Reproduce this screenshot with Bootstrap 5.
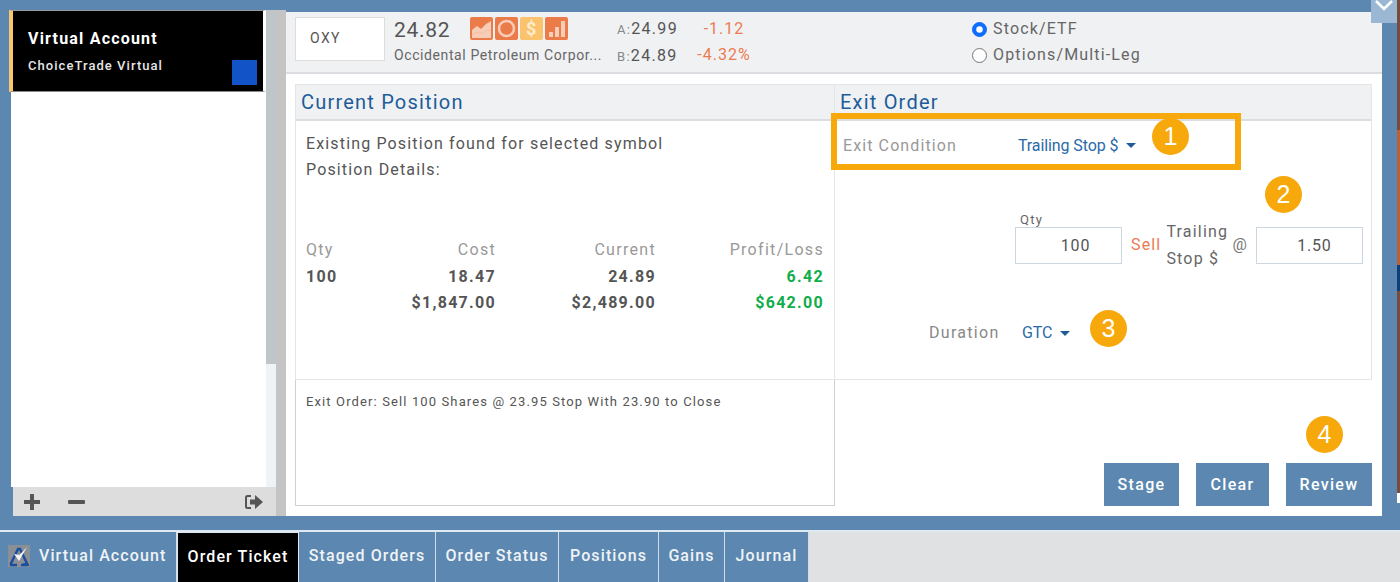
<!DOCTYPE html>
<html lang="en">
<head>
<meta charset="utf-8">
<title>Order Ticket</title>
<link href="https://cdn.jsdelivr.net/npm/bootstrap@5.3.0/dist/css/bootstrap.min.css" rel="stylesheet">
<style>
html,body{height:582px;overflow:hidden}
body{font-family:Roboto,"Liberation Sans",sans-serif;background:#dfe1e3;color:#555;letter-spacing:1.3px;font-size:16px}
.stage{height:530px;background:#5b87b0;padding:10px 18px 14px 11px;display:flex;position:relative}
.edge{position:absolute;left:1397px;top:0;width:3px;height:503px;background:linear-gradient(#7c4a39 0 130px,#b8603c 130px 265px,#0f3f78 265px 291px,#7c4a39 291px 493px,#fff 493px)}
.collapse-tab{position:absolute;left:1371px;top:0;width:26px;height:23px;background:#9ab8d3;display:flex;justify-content:center}
.side{width:265px;display:flex;flex-direction:column;flex:none}
.side-list{flex:1;display:flex;min-height:0}
.side-white{width:255px;background:#fff}
.acct{height:82px;margin-left:-2px;background:#000;border-left:4px solid #f9c76e;border-right:3px solid #fff;border-top:1px solid #999;border-bottom:1px solid #888;color:#fff;padding:17px 15px 0;position:relative}
.acct-name{font-size:16px;font-weight:700;line-height:22px;letter-spacing:1.2px}
.acct-sub{font-size:13px;font-weight:500;line-height:20px;margin-top:6px;color:#e6e6e6;letter-spacing:1.05px}
.swatch{position:absolute;right:6px;bottom:6px;width:25px;height:25px;background:#1254c8}
.sbar{width:10px;background:linear-gradient(#bfc6ca 0 354px,#f0f3f5 354px)}
.side-foot{height:29px;background:#ddd;margin-left:2px;width:263px;display:flex;align-items:center;padding:0 12px 0 10px}
.minus-ico{margin-left:26px}
.gutter{width:10px;flex:none;background:#c4c4c4}
.main{flex:1;background:#fff;display:flex;flex-direction:column;position:relative;margin-top:2px}
.ticker{height:62px;flex:none;background:#f0f1f3;border-bottom:2px solid #dcdde0;display:flex;padding:5px 0 0 9px}
.sym-box{width:90px;height:44px;border:1px solid #ddd;background:#fff;font-size:14px;line-height:40px;padding-left:14px;letter-spacing:1.4px}
.quote{width:208px;margin-left:9px}
.last{font-size:21px;line-height:26px;display:flex;align-items:flex-start;letter-spacing:.7px}
.badges{display:flex;gap:2px;margin-left:20px}
.badges svg{display:block}
.co{font-size:14px;line-height:18px;color:#666;margin-top:3px;white-space:nowrap;letter-spacing:.6px}
.ab{width:100px;margin-left:15px;margin-top:-1px;font-size:16px;line-height:26px}
.ab small{font-size:13px;color:#888}
.chg{width:70px;color:#ec7b52;font-size:16px;line-height:26px;text-align:center;margin-left:-28px;margin-top:-1px;letter-spacing:1px}
.kinds{margin-left:213px;margin-top:-1px;font-size:16px;letter-spacing:1.15px}
.kinds .form-check{min-height:26px;margin:0;padding-left:21px;display:flex;align-items:center}
.kinds .form-check-input{width:15px;height:15px;margin:0 6px 0 -21px;float:none;border-color:#777;flex:none}
.kinds .form-check-input:checked{background-color:#0d6efd;border-color:#0d6efd}
.kinds label{color:#666}
.panels{display:grid;grid-template-columns:540px 537px;grid-template-rows:296px 126px;margin:10px 0 0 9px}
.pane{border:1px solid #e4e5e7;display:flex;flex-direction:column;min-width:0}
.pane+.pane{border-left:0}
.pane-head{height:36px;flex:none;background:#f0f1f3;border-bottom:2px solid #dcdde0;color:#1d5c99;font-size:20px;line-height:35px;padding-left:5px;letter-spacing:1.2px}
.pane-body{flex:1;padding:10px 10px 9px;line-height:26.5px;position:relative}
.intro{letter-spacing:1.15px;line-height:26px}
.postable{display:grid;grid-template-columns:70px 120px 160px 168px;line-height:26.5px;margin-top:54px}
.postable>div{text-align:right;font-weight:700;color:#555}
.postable>div.hd{font-weight:400;color:#999}
.postable>div.l{text-align:left}
.postable>div.gn{color:#0fae4b}
.cond{display:flex;align-items:center;height:22px;margin:4px 0 0 -2px;color:#999;letter-spacing:1.1px}
.cond-lab{width:175px}
.dur-lab{width:93px}
.drop{color:#2a6aa8;font-size:16px;letter-spacing:-.1px;text-decoration:none;padding:0;border:0;background:none}
.drop.dropdown-toggle::after{margin-left:8px;vertical-align:.15em;border-top:5px solid #1d5c99;border-left-width:5.5px;border-right-width:5.5px}
.entry{display:flex;align-items:center;margin-top:61px;margin-left:170px;position:relative}
.entry>*{flex:none}
.entry .form-control{width:107px;height:37px;border-radius:0;border:1px solid #ccd6e0;text-align:center;font-size:16px;color:#555;letter-spacing:.8px;padding:0}
.entry .qty-in{padding-left:14px}
.entry .stop-in{padding-left:9px}
.qty-lab{position:absolute;left:5px;top:-7px;font-size:13px;line-height:18px;color:#666}
.sell{color:#ec7b52;margin:0 5px 0 9px;letter-spacing:1.15px}
.ts{line-height:27px;width:66px;color:#666;letter-spacing:1.2px}
.at{width:14px;margin-right:10px;color:#777;letter-spacing:0}
.dur{display:flex;align-items:center;margin-top:48px;margin-left:84px;color:#888}
.pane-foot{border:1px solid #d0d0d0;border-top:0}
.foot-note{font-size:13px;padding:13px 10px 0;line-height:18px;letter-spacing:1.12px;color:#555}
.foot-right{display:flex;justify-content:flex-end;align-items:flex-end;gap:17px}
.foot-right .btn{height:43px;background:#5b87b0;border:0;border-radius:0;color:#fff;font-weight:500;font-size:16px;letter-spacing:1.3px;padding:0}
.b1{width:75px}.b2{width:73px}.b3{width:86px}
.callout{position:absolute;width:37px;height:37px;border-radius:50%;background:#f7a80b;color:#fff;font-size:25px;line-height:37px;text-align:center;letter-spacing:0;font-family:"Liberation Sans",sans-serif}
.c1{left:866px;top:106px}.c2{left:979px;top:164px}.c3{left:804px;top:298px}.c4{left:1020px;top:404px}
.hl{position:absolute;left:545px;top:101px;width:410px;height:57px;border:6px solid #f7a80b}
.tabs{height:52px;background:#dfe1e3;border-top:2px solid #dfe9f1;display:flex;flex-wrap:nowrap;margin:0;padding:0;list-style:none}
.tabs a{display:flex;align-items:center;height:100%;background:#5b87b0;color:#f0f3f6;font-weight:500;font-size:16px;letter-spacing:1.1px;text-decoration:none;border-right:1px solid #cfdeea;padding:0 0 2px;justify-content:center}
.tabs a.on{background:#000;color:#fff;border:1px solid #dfe9f1;border-bottom:0}
.tabs a.t1{justify-content:flex-start;padding-left:8px}
.t1{width:177px}.t2{width:122px}.t3{width:137px}.t4{width:123px}.t5{width:100px}.t6{width:66px}.t7{width:84px}
.t1 svg{margin-right:9px}
</style>
</head>
<body>
<div class="stage">
  <div class="side">
    <div class="side-list">
      <div class="side-white">
        <div class="acct">
          <div class="acct-name">Virtual Account</div>
          <div class="acct-sub">ChoiceTrade Virtual</div>
          <div class="swatch"></div>
        </div>
      </div>
      <div class="sbar"></div>
    </div>
    <div class="side-foot">
      <svg width="18" height="18" viewBox="0 0 18 18"><path fill="#555" d="M7 1h4v6h6v4h-6v6H7v-6H1V7h6z"/></svg>
      <svg class="minus-ico" width="18" height="18" viewBox="0 0 18 18"><rect x="1" y="7" width="17" height="4" rx="1" fill="#555"/></svg>
      <svg class="ms-auto" width="20" height="18" viewBox="0 0 20 18"><path fill="none" stroke="#555" stroke-width="2" d="M7 3H3.500Q2 3 2 4.500v9Q2 15 3.500 15H7"/><path fill="#555" d="M6 6.500h5V2l8 7-8 7v-4.500H6z"/></svg>
    </div>
  </div>
  <div class="gutter"></div>
  <div class="main">
    <div class="ticker">
      <div class="sym-box">OXY</div>
      <div class="quote">
        <div class="last">24.82
          <div class="badges">
            <svg width="23" height="23" viewBox="0 0 23 23"><rect width="23" height="23" rx="2" fill="#ec7b4a"/><path fill="#f8cdb8" d="M2 13l5-4 4 3 5-5 5-3v9l-5 1-5 3-4-2-5 3z"/><path fill="#f8cdb8" d="M2 18l5-3 4 2 5-3 5-1v8H2z"/></svg>
            <svg width="23" height="23" viewBox="0 0 23 23"><rect width="23" height="23" rx="2" fill="#ec7b4a"/><circle cx="11.500" cy="11.500" r="7.500" fill="none" stroke="#f8cdb8" stroke-width="2.500"/></svg>
            <svg width="23" height="23" viewBox="0 0 23 23"><rect width="23" height="23" rx="2" fill="#fcc36e"/><text x="11.500" y="18" font-size="18" font-weight="700" text-anchor="middle" fill="#fdeccd" font-family="Roboto,sans-serif">$</text></svg>
            <svg width="23" height="23" viewBox="0 0 23 23"><rect width="23" height="23" rx="2" fill="#ec7b4a"/><path fill="#f8cdb8" d="M4 15h4v5H4zM10 10h4v10h-4zM16 4h4v16h-4z"/></svg>
          </div>
        </div>
        <div class="co">Occidental Petroleum Corpor...</div>
      </div>
      <div class="ab"><div><small>A:</small>24.99</div><div><small>B:</small>24.89</div></div>
      <div class="chg"><div>-1.12</div><div>-4.32%</div></div>
      <div class="kinds">
        <div class="form-check"><input class="form-check-input" type="radio" name="k" id="k1" checked><label class="form-check-label" for="k1">Stock/ETF</label></div>
        <div class="form-check"><input class="form-check-input" type="radio" name="k" id="k2"><label class="form-check-label" for="k2">Options/Multi-Leg</label></div>
      </div>
    </div>
    <div class="panels">
      <div class="pane">
        <div class="pane-head">Current Position</div>
        <div class="pane-body">
          <div class="intro">Existing Position found for selected symbol</div>
          <div class="intro">Position Details:</div>
          <div class="postable">
            <div class="hd l">Qty</div><div class="hd">Cost</div><div class="hd">Current</div><div class="hd">Profit/Loss</div>
            <div class="l">100</div><div>18.47</div><div>24.89</div><div class="gn">6.42</div>
            <div></div><div>$1,847.00</div><div>$2,489.00</div><div class="gn">$642.00</div>
          </div>
        </div>
      </div>
      <div class="pane">
        <div class="pane-head">Exit Order</div>
        <div class="pane-body">
          <div class="cond"><span class="cond-lab">Exit Condition</span><button class="drop dropdown-toggle" type="button">Trailing Stop $</button></div>
          <div class="entry">
            <span class="qty-lab">Qty</span>
            <input class="form-control qty-in" value="100" aria-label="Qty">
            <span class="sell">Sell</span>
            <span class="ts">Trailing Stop $</span>
            <span class="at">@</span>
            <input class="form-control stop-in" value="1.50" aria-label="Stop">
          </div>
          <div class="dur"><span class="dur-lab">Duration</span><button class="drop dropdown-toggle" type="button">GTC</button></div>
        </div>
      </div>
      <div class="pane-foot"><div class="foot-note">Exit Order: Sell 100 Shares @ 23.95 Stop With 23.90 to Close</div></div>
      <div class="foot-right">
        <button class="btn b1" type="button">Stage</button>
        <button class="btn b2" type="button">Clear</button>
        <button class="btn b3" type="button">Review</button>
      </div>
    </div>
    <div class="hl"></div>
    <div class="callout c1">1</div>
    <div class="callout c2">2</div>
    <div class="callout c3">3</div>
    <div class="callout c4">4</div>
  </div>
  <div class="collapse-tab"><svg width="20" height="12" viewBox="0 0 20 12"><path d="M2 1l8 8 8-8" fill="none" stroke="#fff" stroke-width="2.500"/></svg></div>
  <div class="edge"></div>
</div>
<ul class="tabs">
  <li><a class="t1" href="#"><svg width="22" height="22" viewBox="0 0 22 22"><rect width="22" height="22" fill="#8a8f96"/><path d="M2.500 19.500L10 4h2l7.500 15.500H15" fill="none" stroke="#1c4ea0" stroke-width="2.500"/><path d="M2 20h7M13 20h7" stroke="#1c4ea0" stroke-width="2.500"/><path d="M6 9l5 7 8-14-7.500 8z" fill="#f4f4f4"/></svg>Virtual Account</a></li>
  <li><a class="t2 on" href="#">Order Ticket</a></li>
  <li><a class="t3" href="#">Staged Orders</a></li>
  <li><a class="t4" href="#">Order Status</a></li>
  <li><a class="t5" href="#">Positions</a></li>
  <li><a class="t6" href="#">Gains</a></li>
  <li><a class="t7" href="#">Journal</a></li>
</ul>
<script src="https://cdn.jsdelivr.net/npm/bootstrap@5.3.0/dist/js/bootstrap.bundle.min.js"></script>
</body>
</html>
